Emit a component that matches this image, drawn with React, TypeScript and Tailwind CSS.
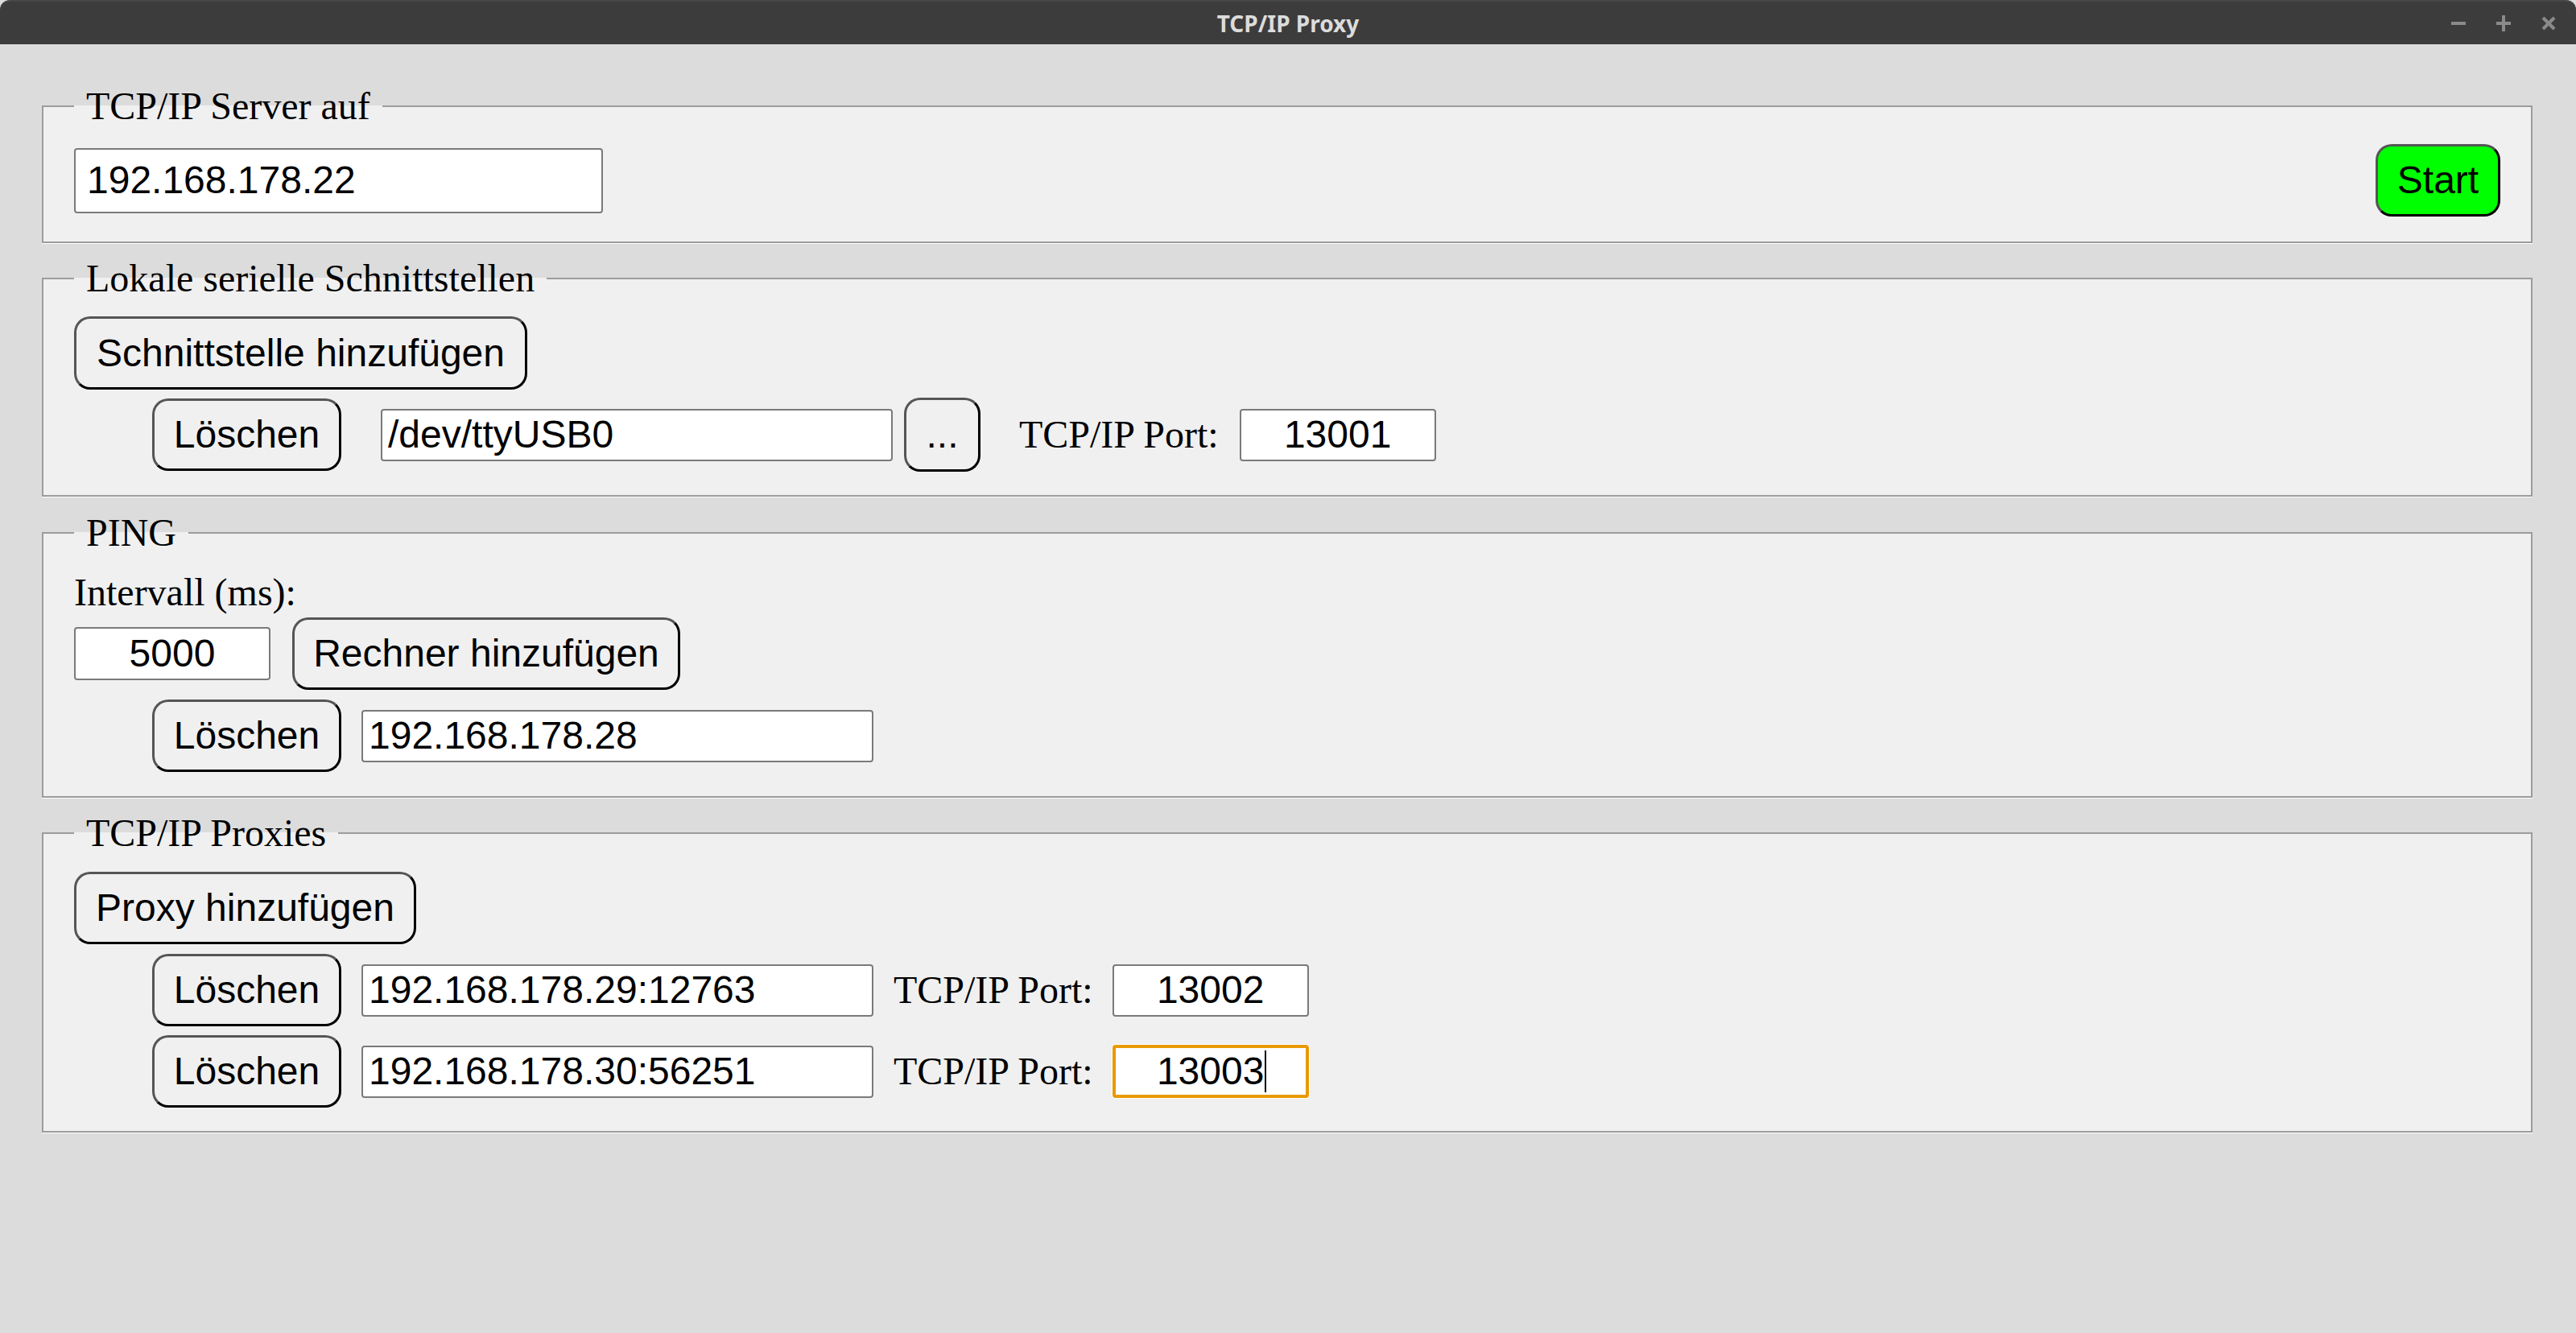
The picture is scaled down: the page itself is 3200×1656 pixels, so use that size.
import React from "react";

const SANS = "font-['Liberation_Sans',Arial,sans-serif]";
const SERIF = "font-['Liberation_Serif','Times_New_Roman',serif]";

function Btn({
  children,
  className = "",
  bg = "bg-[#f0f0f0]",
}: {
  children: React.ReactNode;
  className?: string;
  bg?: string;
}) {
  return (
    <button
      className={`${SANS} ${bg} h-[90px] px-0 text-center rounded-[20px] border-[3px] border-t-[#555555] border-l-[#555555] border-r-black border-b-black text-[48px] leading-none text-black whitespace-nowrap shrink-0 ${className}`}
    >
      {children}
    </button>
  );
}

function Field({ children, className = "" }: { children: React.ReactNode; className?: string }) {
  return (
    <div
      className={`${SANS} h-[65px] flex items-center rounded-[4px] bg-white text-[48px] leading-none text-black whitespace-nowrap shrink-0 ${className}`}
    >
      {children}
    </div>
  );
}

function Label({ children, className = "" }: { children: React.ReactNode; className?: string }) {
  return (
    <span className={`${SERIF} text-[48px] leading-[52px] text-black whitespace-nowrap shrink-0 ${className}`}>
      {children}
    </span>
  );
}

function Group({
  title,
  children,
  className = "",
}: {
  title: string;
  children: React.ReactNode;
  className?: string;
}) {
  return (
    <fieldset
      className={`border-2 border-[#9c9c9c] bg-[#f0f0f0] px-[38px] shadow-[0_1px_0_#ffffff] ${className}`}
    >
      <legend className={`${SERIF} px-[15px] text-[48px] leading-[52px] text-black`}>{title}</legend>
      {children}
    </fieldset>
  );
}

const NORMAL = "border-2 border-[#7a7a7a]";

export default function App() {
  return (
    <div className="w-[3200px] h-[1656px] bg-[#dcdcdc] overflow-hidden flex flex-col">
      {/* Title bar */}
      <div className="h-[55px] shrink-0 bg-[#3c3c3c] border-t-2 border-[#474747] rounded-t-[12px] grid grid-cols-3 items-center">
        <div />
        <div className="text-center font-['Noto_Sans',sans-serif] font-bold text-[28px] leading-none text-[#dcdcdc]">
          TCP/IP Proxy
        </div>
        <div className="flex justify-end items-center gap-[38px] pr-[25px]">
          <svg width="18" height="18" viewBox="0 0 18 18">
            <line x1="0" y1="9" x2="18" y2="9" stroke="#8a8a8a" strokeWidth="4" />
          </svg>
          <svg width="18" height="20" viewBox="0 0 18 20">
            <line x1="0" y1="10" x2="18" y2="10" stroke="#8a8a8a" strokeWidth="4" />
            <line x1="9" y1="0" x2="9" y2="20" stroke="#8a8a8a" strokeWidth="4" />
          </svg>
          <svg width="18" height="18" viewBox="0 0 18 18">
            <line x1="2" y1="2" x2="16" y2="16" stroke="#8a8a8a" strokeWidth="4" />
            <line x1="16" y1="2" x2="2" y2="16" stroke="#8a8a8a" strokeWidth="4" />
          </svg>
        </div>
      </div>

      {/* Content */}
      <div className="pl-[52px] pr-[54px] pt-[51px] flex flex-col">
        {/* Server */}
        <Group title="TCP/IP Server auf" className="pt-[21px] pb-[31px]">
          <div className="flex items-center justify-between">
            <Field className={`${NORMAL} w-[657px] h-[81px] pl-[14px]`}>192.168.178.22</Field>
            <Btn bg="bg-[#00ff00]" className="w-[155px]">Start</Btn>
          </div>
        </Group>

        {/* Serial */}
        <Group title="Lokale serielle Schnittstellen" className="mt-[18px] pt-[21px] pb-[29px]">
          <div className="flex flex-col items-start">
            <Btn className="h-[91px] w-[563px]">Schnittstelle hinzufügen</Btn>
            <div className="mt-[10px] h-[92px] flex items-center pl-[97px]">
              <Btn className="w-[235px]">Löschen</Btn>
              <Field className={`${NORMAL} ml-[49px] w-[636px] pl-[7px]`}>/dev/ttyUSB0</Field>
              <Btn className="ml-[14px] h-[92px] w-[95px]">...</Btn>
              <Label className="ml-[48px]">TCP/IP Port:</Label>
              <Field className={`${NORMAL} ml-[26px] w-[244px] justify-center`}>13001</Field>
            </div>
          </div>
        </Group>

        {/* Ping */}
        <Group title="PING" className="mt-[19px] pt-[22px] pb-[30px]">
          <div className="flex flex-col items-start">
            <Label>Intervall (ms):</Label>
            <div className="mt-[5px] flex items-center">
              <Field className={`${NORMAL} w-[244px] h-[66px] justify-center`}>5000</Field>
              <Btn className="ml-[27px] w-[482px]">Rechner hinzufügen</Btn>
            </div>
            <div className="mt-[12px] flex items-center pl-[97px]">
              <Btn className="w-[235px]">Löschen</Btn>
              <Field className={`${NORMAL} ml-[25px] w-[636px] pl-[7px]`}>192.168.178.28</Field>
            </div>
          </div>
        </Group>

        {/* Proxies */}
        <Group title="TCP/IP Proxies" className="mt-[18px] pt-[22px] pb-[29px]">
          <div className="flex flex-col items-start">
            <Btn className="w-[425px]">Proxy hinzufügen</Btn>
            <div className="mt-[12px] flex items-center pl-[97px]">
              <Btn className="w-[235px]">Löschen</Btn>
              <Field className={`${NORMAL} ml-[25px] w-[636px] pl-[7px]`}>192.168.178.29:12763</Field>
              <Label className="ml-[25px]">TCP/IP Port:</Label>
              <Field className={`${NORMAL} ml-[24px] w-[244px] justify-center`}>13002</Field>
            </div>
            <div className="mt-[11px] flex items-center pl-[97px]">
              <Btn className="w-[235px]">Löschen</Btn>
              <Field className={`${NORMAL} ml-[25px] w-[636px] pl-[7px]`}>192.168.178.30:56251</Field>
              <Label className="ml-[25px]">TCP/IP Port:</Label>
              <Field className="ml-[24px] w-[244px] h-[66px] justify-center border-4 border-[#e89a00] shadow-[0_0_0_1px_#ffffff]">
                <span className="relative">
                  13003
                  <span className="absolute left-full ml-[1px] top-1/2 -translate-y-1/2 w-[2px] h-[52px] bg-black" />
                </span>
              </Field>
            </div>
          </div>
        </Group>
      </div>
    </div>
  );
}
